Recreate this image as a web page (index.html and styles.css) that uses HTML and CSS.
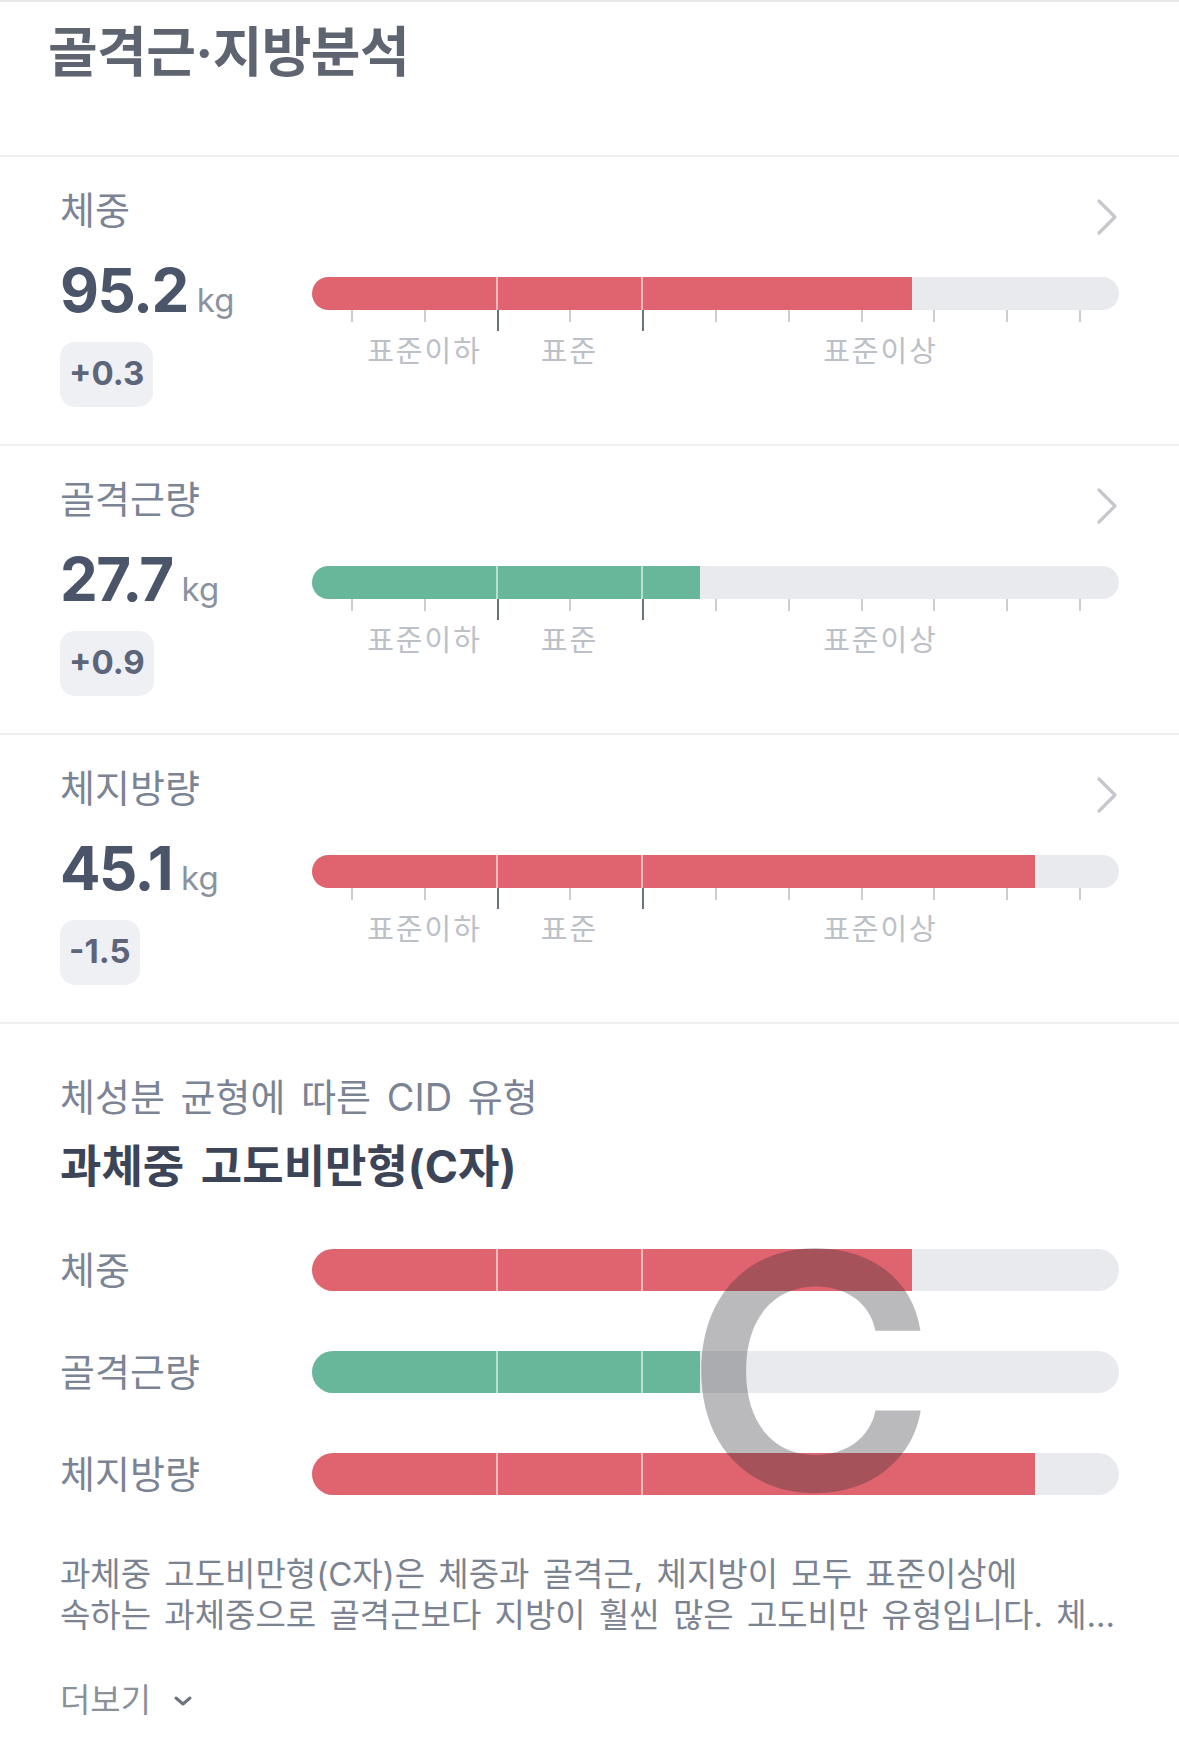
FILE: index.html
```html
<!DOCTYPE html>
<html lang="ko">
<head>
    <meta charset="UTF-8">
    <meta name="viewport" content="width=device-width, initial-scale=1.0">
    <title>골격근·지방분석</title>
    <link rel="stylesheet" href="styles.css">
</head>
<body>
    <div class="page">
        <header class="page-head">
            <h1 class="page-title">골격근·지방분석</h1>
        </header>

        <!-- 체중 -->
        <section class="metric">
            <div class="metric-info">
                <div class="metric-name">체중</div>
                <div class="metric-value"><span class="num">95.2</span><span class="unit">kg</span></div>
                <span class="delta">+0.3</span>
            </div>
            <div class="metric-chart">
                <svg class="chevron" viewBox="0 0 24 38" width="24" height="38"><path d="M4 3 L20 19 L4 35"/></svg>
                <div class="bar">
                    <div class="fill red" style="width: 74.3%"></div>
                    <i class="split split-1"></i><i class="split split-2"></i>
                </div>
                <div class="ticks">
                    <i></i><i></i><i class="major"></i><i></i><i class="major"></i><i></i><i></i><i></i><i></i><i></i><i></i>
                </div>
                <div class="scale">
                    <span>표준이하</span><span>표준</span><span>표준이상</span>
                </div>
            </div>
        </section>

        <!-- 골격근량 -->
        <section class="metric">
            <div class="metric-info">
                <div class="metric-name">골격근량</div>
                <div class="metric-value"><span class="num">27.7</span><span class="unit">kg</span></div>
                <span class="delta">+0.9</span>
            </div>
            <div class="metric-chart">
                <svg class="chevron" viewBox="0 0 24 38" width="24" height="38"><path d="M4 3 L20 19 L4 35"/></svg>
                <div class="bar">
                    <div class="fill green" style="width: 48.1%"></div>
                    <i class="split split-1"></i><i class="split split-2"></i>
                </div>
                <div class="ticks">
                    <i></i><i></i><i class="major"></i><i></i><i class="major"></i><i></i><i></i><i></i><i></i><i></i><i></i>
                </div>
                <div class="scale">
                    <span>표준이하</span><span>표준</span><span>표준이상</span>
                </div>
            </div>
        </section>

        <!-- 체지방량 -->
        <section class="metric">
            <div class="metric-info">
                <div class="metric-name">체지방량</div>
                <div class="metric-value"><span class="num">45.1</span><span class="unit">kg</span></div>
                <span class="delta">-1.5</span>
            </div>
            <div class="metric-chart">
                <svg class="chevron" viewBox="0 0 24 38" width="24" height="38"><path d="M4 3 L20 19 L4 35"/></svg>
                <div class="bar">
                    <div class="fill red" style="width: 89.6%"></div>
                    <i class="split split-1"></i><i class="split split-2"></i>
                </div>
                <div class="ticks">
                    <i></i><i></i><i class="major"></i><i></i><i class="major"></i><i></i><i></i><i></i><i></i><i></i><i></i>
                </div>
                <div class="scale">
                    <span>표준이하</span><span>표준</span><span>표준이상</span>
                </div>
            </div>
        </section>

        <!-- CID 유형 -->
        <section class="cid">
            <div class="cid-caption">체성분 균형에 따른 CID 유형</div>
            <div class="cid-type">과체중 고도비만형(C자)</div>

            <div class="cid-chart">
                <div class="cid-row">
                    <span class="cid-label">체중</span>
                    <div class="bar bar-lg">
                        <div class="fill red" style="width: 74.3%"></div>
                        <i class="split split-1"></i><i class="split split-2"></i>
                    </div>
                </div>
                <div class="cid-row">
                    <span class="cid-label">골격근량</span>
                    <div class="bar bar-lg">
                        <div class="fill green" style="width: 48.1%"></div>
                        <i class="split split-1"></i><i class="split split-2"></i>
                    </div>
                </div>
                <div class="cid-row">
                    <span class="cid-label">체지방량</span>
                    <div class="bar bar-lg">
                        <div class="fill red" style="width: 89.6%"></div>
                        <i class="split split-1"></i><i class="split split-2"></i>
                    </div>
                </div>
                <span class="cid-letter">C</span>
            </div>

            <p class="cid-desc">과체중 고도비만형(C자)은 체중과 골격근, 체지방이 모두 표준이상에<br>속하는 과체중으로 골격근보다 지방이 훨씬 많은 고도비만 유형입니다. 체중 감량과 함께 근력 운동을 병행하는 것이 좋습니다.</p>

            <button class="more" type="button">더보기
                <svg viewBox="0 0 20 12" width="20" height="12"><path d="M3 3 L10 9 L17 3"/></svg>
            </button>
        </section>
    </div>
</body>
</html>
```

FILE: styles.css
```css
* {
    box-sizing: border-box;
}

body {
    margin: 0;
    background-color: #ffffff;
    font-family: "Inter", "Noto Sans CJK KR", sans-serif;
    color: #5e6570;
}

.page {
    width: 1179px;
    border-top: 2px solid #e7e8ea;
}

.page-head {
    height: 153px;
    padding: 18px 0 0 48px;
}

.page-title {
    margin: 0;
    font-size: 54px;
    line-height: 66px;
    font-weight: 700;
    letter-spacing: -0.6px;
    color: #5e6570;
}

/* 항목별 카드 */
.metric {
    display: grid;
    grid-template-columns: 252px 1fr;
    height: 289px;
    padding: 0 60px;
    border-top: 2px solid #eeeff1;
}

.metric-name {
    margin-top: 30px;
    font-size: 38px;
    line-height: 46px;
    color: #7b8494;
}

.metric-value {
    display: flex;
    align-items: baseline;
    margin-top: 27px;
    line-height: 60px;
    height: 60px;
}

.metric-value .num {
    font-size: 60px;
    font-weight: 700;
    letter-spacing: -1.5px;
    color: #4b5569;
}

.metric-value .unit {
    margin-left: 9px;
    font-size: 33px;
    color: #8b929e;
}

.delta {
    display: inline-block;
    margin-top: 22px;
    height: 65px;
    padding: 0 9px;
    border-radius: 15px;
    background-color: #eff0f4;
    font-size: 33px;
    font-weight: 700;
    line-height: 62px;
    color: #5c6579;
}

.metric-chart {
    display: flex;
    flex-direction: column;
}

.chevron {
    align-self: flex-end;
    margin-top: 41px;
    margin-right: 0;
    fill: none;
    stroke: #c5c7cc;
    stroke-width: 3.2;
    stroke-linecap: round;
    stroke-linejoin: round;
}

/* 막대 그래프 */
.bar {
    position: relative;
    display: flex;
    height: 33px;
    border-radius: 17px;
    background-color: #e9eaee;
    overflow: hidden;
}

.metric .bar {
    margin-top: 41px;
}

.bar-lg {
    height: 42px;
    border-radius: 21px;
}

.fill {
    height: 100%;
}

.fill.red {
    background-color: #e0646f;
}

.fill.green {
    background-color: #68b79a;
}

.split {
    position: absolute;
    top: 0;
    bottom: 0;
    width: 2px;
    background-color: rgba(255, 255, 255, 0.55);
}

.split-1 {
    left: 184px;
}

.split-2 {
    left: 329px;
}

.ticks {
    display: flex;
    justify-content: space-between;
    align-items: flex-start;
    height: 25px;
    padding: 0 38px 0 39px;
}

.ticks i {
    width: 2px;
    height: 12px;
    background-color: #cbcdd3;
}

.ticks i.major {
    height: 21px;
    background-color: #6b727e;
}

.scale {
    display: grid;
    grid-template-columns: 40px 145px 145px 1fr;
    font-size: 29px;
    line-height: 34px;
    letter-spacing: 2px;
    color: #bcc0c7;
}

.scale span {
    text-align: center;
}

.scale span:first-child {
    grid-column: 2;
}

/* CID 유형 */
.cid {
    padding: 50px 60px 0;
    border-top: 2px solid #eeeff1;
}

.cid-caption {
    font-size: 38px;
    line-height: 46px;
    word-spacing: 5px;
    color: #7b8494;
}

.cid-type {
    margin-top: 21px;
    font-size: 45px;
    line-height: 52px;
    font-weight: 700;
    word-spacing: 6px;
    color: #3c4457;
}

.cid-chart {
    position: relative;
    display: flex;
    flex-direction: column;
    gap: 60px;
    margin-top: 56px;
}

.cid-row {
    display: grid;
    grid-template-columns: 252px 1fr;
    align-items: center;
    height: 42px;
}

.cid-label {
    font-size: 38px;
    line-height: 42px;
    color: #7b8494;
}

/* 유형 글자는 막대 위에 반투명으로 겹친다 */
.cid-letter {
    position: absolute;
    left: 624px;
    top: -42px;
    font-size: 328px;
    line-height: 1;
    font-weight: 600;
    color: rgba(45, 45, 52, 0.33);
    transform: scaleX(1.045);
    transform-origin: left top;
    pointer-events: none;
}

.cid-desc {
    margin: 59px 0 0;
    font-size: 33px;
    line-height: 41px;
    word-spacing: 4px;
    color: #7b8391;
    display: -webkit-box;
    -webkit-line-clamp: 2;
    -webkit-box-orient: vertical;
    overflow: hidden;
}

.more {
    display: flex;
    align-items: center;
    gap: 22px;
    margin-top: 44px;
    padding: 0;
    border: 0;
    background: none;
    font-family: inherit;
    font-size: 33px;
    line-height: 41px;
    color: #8b919b;
}

.more svg {
    fill: none;
    stroke: #6c7380;
    stroke-width: 3;
    stroke-linecap: round;
    stroke-linejoin: round;
}
```
